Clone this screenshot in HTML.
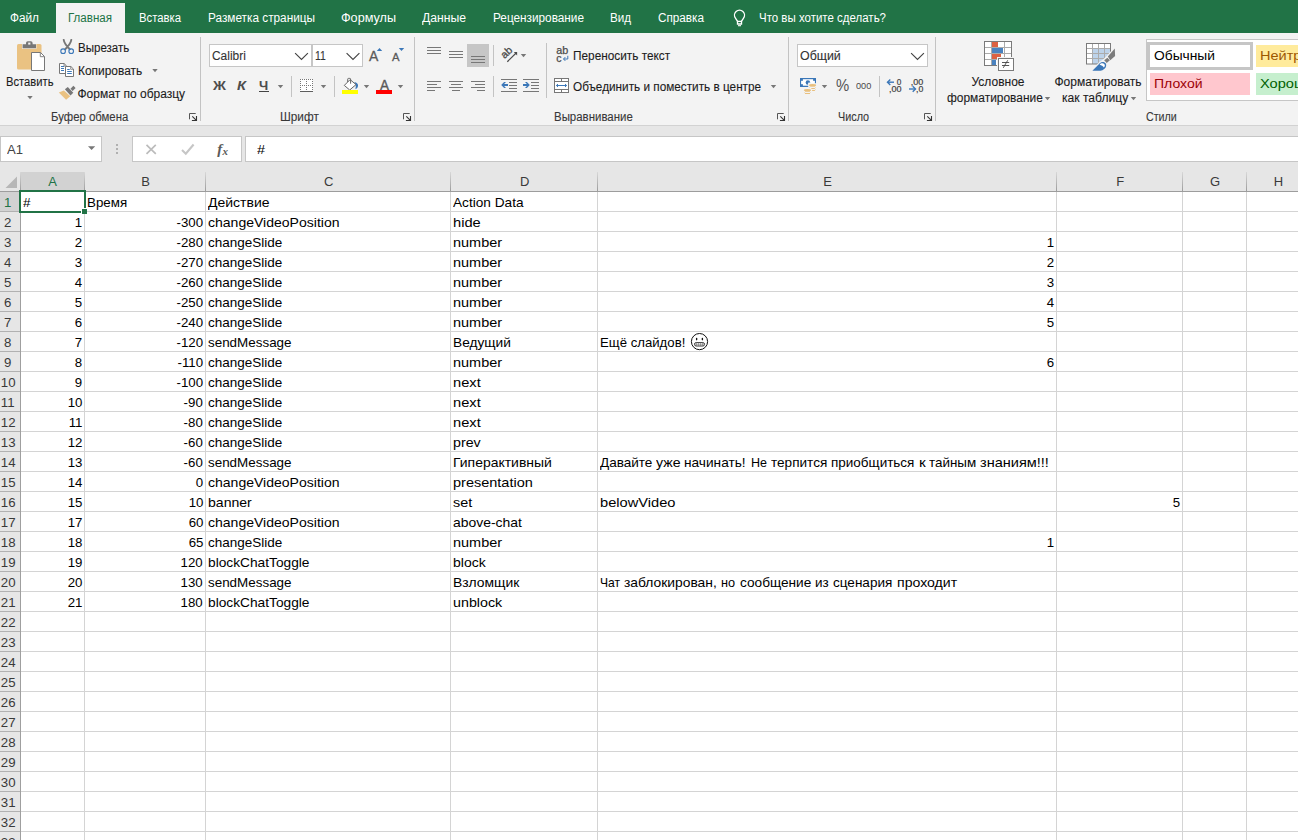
<!DOCTYPE html><html><head><meta charset="utf-8"><title>Excel</title><style>html,body{margin:0;padding:0;overflow:hidden}body{width:1298px;height:840px;overflow:hidden;position:relative;background:#e6e6e6;font-family:"Liberation Sans",sans-serif;}div,svg{box-sizing:border-box}</style></head><body><div style="position:absolute;left:0;top:0;width:1298px;height:840px;overflow:hidden">
<div style="position:absolute;left:0px;top:0px;width:1298px;height:33px;background:#217346;"></div>
<div style="position:absolute;left:56px;top:3px;width:69px;height:30px;background:#f3f3f3;"></div>
<div style="position:absolute;top:9.00px;height:18px;line-height:18px;font-size:12px;color:#ffffff;white-space:pre;left:10.00px;transform-origin:0 50%;transform:scaleX(0.9830);">Файл</div>
<div style="position:absolute;top:9.00px;height:18px;line-height:18px;font-size:12px;color:#217346;white-space:pre;left:68.00px;transform-origin:0 50%;transform:scaleX(0.9634);">Главная</div>
<div style="position:absolute;top:9.00px;height:18px;line-height:18px;font-size:12px;color:#ffffff;white-space:pre;left:139.00px;transform-origin:0 50%;transform:scaleX(0.9417);">Вставка</div>
<div style="position:absolute;top:9.00px;height:18px;line-height:18px;font-size:12px;color:#ffffff;white-space:pre;left:208.00px;transform-origin:0 50%;transform:scaleX(0.9829);">Разметка страницы</div>
<div style="position:absolute;top:9.00px;height:18px;line-height:18px;font-size:12px;color:#ffffff;white-space:pre;left:341.00px;transform-origin:0 50%;transform:scaleX(1.0533);">Формулы</div>
<div style="position:absolute;top:9.00px;height:18px;line-height:18px;font-size:12px;color:#ffffff;white-space:pre;left:422.00px;transform-origin:0 50%;transform:scaleX(1.0150);">Данные</div>
<div style="position:absolute;top:9.00px;height:18px;line-height:18px;font-size:12px;color:#ffffff;white-space:pre;left:493.00px;transform-origin:0 50%;transform:scaleX(0.9821);">Рецензирование</div>
<div style="position:absolute;top:9.00px;height:18px;line-height:18px;font-size:12px;color:#ffffff;white-space:pre;left:610.00px;transform-origin:0 50%;transform:scaleX(0.9674);">Вид</div>
<div style="position:absolute;top:9.00px;height:18px;line-height:18px;font-size:12px;color:#ffffff;white-space:pre;left:658.00px;transform-origin:0 50%;transform:scaleX(0.9772);">Справка</div>
<div style="position:absolute;top:9.00px;height:18px;line-height:18px;font-size:12px;color:#ffffff;white-space:pre;left:759.00px;transform-origin:0 50%;transform:scaleX(0.9574);">Что вы хотите сделать?</div>
<svg style="position:absolute;left:733px;top:9px;" width="14" height="18" viewBox="0 0 14 18"><path d="M4.6 12.3L2.6 9.3A5 5 0 1 1 10.4 9.3L8.4 12.3" fill="none" stroke="#fff" stroke-width="1.35"/><path d="M4.5 12.4h4v2.6h-4z" fill="none" stroke="#fff" stroke-width="1.35"/><path d="M5 16.7h3" stroke="#fff" stroke-width="1.1"/></svg>
<div style="position:absolute;left:0px;top:33px;width:1298px;height:92px;background:#f3f3f3;"></div>
<div style="position:absolute;left:0px;top:125px;width:1298px;height:1px;background:#d2d2d2;"></div>
<svg style="position:absolute;left:17px;top:41px;" width="29" height="31" viewBox="0 0 29 31">
<rect x="0" y="3" width="24.5" height="25.5" rx="1.5" fill="#eac282"/>
<rect x="5" y="2.6" width="14.4" height="5.2" fill="#f3f3f3"/>
<path d="M5.6 3.2h3.4v-1.2a1.8 1.8 0 0 1 1.8-1.8h3a1.8 1.8 0 0 1 1.8 1.8v1.2h3.4v4h-13.4z" fill="#777"/>
<rect x="11.2" y="1.6" width="2.2" height="2" fill="#f3f3f3"/>
<path d="M14.5 11.5h9l4 4v14h-13z" fill="#fff" stroke="#777" stroke-width="1"/>
<path d="M23.3 11.7v4h4" fill="none" stroke="#777" stroke-width="0.9"/>
</svg>
<div style="position:absolute;top:72.80px;height:18px;line-height:18px;font-size:12px;color:#1c1c1c;white-space:pre;left:5.60px;transform-origin:0 50%;transform:scaleX(0.9339);-webkit-text-stroke:0.1px #1c1c1c;">Вставить</div>
<svg style="position:absolute;left:27px;top:96px;" width="7" height="5" viewBox="0 0 7 5"><g transform="translate(0.3,0)"><path d="M0 0h5.4L2.7 3.3z" fill="#777"/></g></svg>
<svg style="position:absolute;left:60px;top:39px;" width="16" height="16" viewBox="0 0 16 16"><g transform="translate(0,0.5)">
<path d="M3.700 0.400C4.200 3.500 6.500 6.500 9.800 9.700M11.300 0.400C10.800 3.500 8.500 6.500 5.200 9.700" stroke="#777" stroke-width="1.900" fill="none" stroke-linecap="round"/>
<circle cx="3.100" cy="11.700" r="2.300" fill="none" stroke="#3b77b8" stroke-width="1.100"/>
<circle cx="11.200" cy="11.700" r="2.300" fill="none" stroke="#3b77b8" stroke-width="1.100"/>
</g></svg>
<div style="position:absolute;top:38.80px;height:18px;line-height:18px;font-size:12px;color:#1c1c1c;white-space:pre;left:77.50px;transform-origin:0 50%;transform:scaleX(0.9612);-webkit-text-stroke:0.1px #1c1c1c;">Вырезать</div>
<svg style="position:absolute;left:59px;top:63px;" width="16" height="15" viewBox="0 0 16 15">
<path d="M0.5 0.5h4.6l2.4 2.4v7.600h-7z" fill="#fff" stroke="#777"/>
<path d="M5 0.7v2.4h2.4" fill="none" stroke="#777" stroke-width="0.8"/>
<path d="M2 3.5h3M2 5.500h3M2 7.500h3" stroke="#3b77b8" stroke-width="1"/>
<path d="M6.5 3.5h5.400l2.600 2.600v7.400h-8z" fill="#fff" stroke="#777"/>
<path d="M11.7 3.7v2.600h2.600" fill="none" stroke="#777" stroke-width="0.8"/>
<path d="M8.200 6.500h2.500M8.200 8.500h4.600M8.200 10.500h4.600" stroke="#3b77b8" stroke-width="1"/>
</svg>
<div style="position:absolute;top:61.80px;height:18px;line-height:18px;font-size:12px;color:#1c1c1c;white-space:pre;left:77.50px;transform-origin:0 50%;transform:scaleX(0.9937);-webkit-text-stroke:0.1px #1c1c1c;">Копировать</div>
<svg style="position:absolute;left:152px;top:69px;" width="7" height="5" viewBox="0 0 7 5"><g transform="translate(0.3,0)"><path d="M0 0h5.4L2.7 3.3z" fill="#777"/></g></svg>
<svg style="position:absolute;left:58px;top:85px;" width="19" height="16" viewBox="0 0 19 16">
<path d="M0.800 7.400L5.900 5.500L12.300 11.300L8.100 14.800z" fill="#eac282"/>
<path d="M6.900 4.300L9.800 2.100L15.300 7.800L12.500 10.400z" fill="#777"/>
<path d="M12.500 3.700L15.400 0.800L17.600 2.900L14.600 5.900z" fill="#777"/>
</svg>
<div style="position:absolute;top:84.80px;height:18px;line-height:18px;font-size:12px;color:#1c1c1c;white-space:pre;left:77.50px;transform-origin:0 50%;-webkit-text-stroke:0.1px #1c1c1c;">Формат по образцу</div>
<div style="position:absolute;top:107.60px;height:18px;line-height:18px;font-size:12px;color:#383838;white-space:pre;left:50.50px;transform-origin:0 50%;transform:scaleX(0.9481);-webkit-text-stroke:0.1px #383838;">Буфер обмена</div>
<svg style="position:absolute;left:188px;top:112px;" width="11" height="11" viewBox="0 0 11 11"><g transform="translate(0.5,0.5)"><path d="M1 6.800V1H7.200" fill="none" stroke="#555" stroke-width="1"/><path d="M3.800 3.800L7.600 7.600" stroke="#333" stroke-width="1.1"/><path d="M8 3.400V8H3.400" fill="none" stroke="#333" stroke-width="1.1"/></g></svg>
<div style="position:absolute;left:200px;top:37px;width:1px;height:84px;background:#c3c3c3;"></div>
<div style="position:absolute;left:209px;top:44px;width:103px;height:23px;background:#fff;border:1px solid #c6c6c6;"></div>
<div style="position:absolute;left:312px;top:44px;width:51px;height:23px;background:#fff;border:1px solid #c6c6c6;"></div>
<div style="position:absolute;top:46.80px;height:18px;line-height:18px;font-size:12px;color:#333;white-space:pre;left:212.00px;transform-origin:0 50%;transform:scaleX(0.9939);-webkit-text-stroke:0.1px #333;">Calibri</div>
<svg style="position:absolute;left:294px;top:52px;" width="16" height="9" viewBox="0 0 16 9"><g transform="translate(0,0.5)"><path d="M1.100 0.700L7.500 7L13.900 0.700" fill="none" stroke="#444" stroke-width="1.150"/></g></svg>
<div style="position:absolute;top:46.80px;height:18px;line-height:18px;font-size:12px;color:#333;white-space:pre;left:315.00px;transform-origin:0 50%;transform:scaleX(0.8671);-webkit-text-stroke:0.1px #333;">11</div>
<svg style="position:absolute;left:345px;top:52px;" width="16" height="9" viewBox="0 0 16 9"><g transform="translate(0.5,0.5)"><path d="M1.100 0.700L7.500 7L13.900 0.700" fill="none" stroke="#444" stroke-width="1.150"/></g></svg>
<div style="position:absolute;top:46.40px;height:20px;line-height:20px;font-size:14px;color:#595959;white-space:pre;left:369.20px;transform-origin:0 50%;transform:scaleX(0.9959);-webkit-text-stroke:0.3px #595959;">A</div>
<svg style="position:absolute;left:376px;top:47px;" width="7" height="5" viewBox="0 0 7 5"><g transform="translate(0.8,0.6)"><path d="M0 3.400h5.400L2.700 0.300z" fill="#3b77b8"/></g></svg>
<div style="position:absolute;top:49.10px;height:17px;line-height:17px;font-size:11px;color:#595959;white-space:pre;left:392.20px;transform-origin:0 50%;transform:scaleX(1.0222);-webkit-text-stroke:0.3px #595959;">A</div>
<svg style="position:absolute;left:398px;top:47px;" width="7" height="5" viewBox="0 0 7 5"><g transform="translate(0.8,0.8)"><path d="M0 0.100h5.400L2.700 3.300z" fill="#3b77b8"/></g></svg>
<div style="position:absolute;top:76.85px;height:18.5px;line-height:18.5px;font-size:12.5px;color:#4d4d4d;white-space:pre;font-weight:bold;left:213.30px;transform-origin:0 50%;transform:scaleX(1.1419);">Ж</div>
<div style="position:absolute;top:76.85px;height:18.5px;line-height:18.5px;font-size:12.5px;color:#4d4d4d;white-space:pre;font-weight:bold;font-style:italic;left:237.20px;transform-origin:0 50%;transform:scaleX(1.1713);">К</div>
<div style="position:absolute;top:76.85px;height:18.5px;line-height:18.5px;font-size:12.5px;color:#4d4d4d;white-space:pre;font-weight:bold;left:259.10px;transform-origin:0 50%;transform:scaleX(1.0475);">Ч</div>
<div style="position:absolute;left:259px;top:91px;width:10px;height:1px;background:#444;"></div>
<svg style="position:absolute;left:277px;top:85px;" width="7" height="5" viewBox="0 0 7 5"><g transform="translate(0.8,0)"><path d="M0 0h5.4L2.7 3.3z" fill="#777"/></g></svg>
<div style="position:absolute;left:291px;top:76px;width:1px;height:21px;background:#c3c3c3;"></div>
<svg style="position:absolute;left:300px;top:79px;" width="14" height="14" viewBox="0 0 14 14"><rect x="0" y="0" width="13" height="12.500" fill="#fff"/><rect x="0" y="0.0" width="1" height="1" fill="#777"/><rect x="2" y="0.0" width="1" height="1" fill="#777"/><rect x="4" y="0.0" width="1" height="1" fill="#777"/><rect x="6" y="0.0" width="1" height="1" fill="#777"/><rect x="8" y="0.0" width="1" height="1" fill="#777"/><rect x="10" y="0.0" width="1" height="1" fill="#777"/><rect x="12" y="0.0" width="1" height="1" fill="#777"/><rect x="0" y="6.0" width="1" height="1" fill="#777"/><rect x="2" y="6.0" width="1" height="1" fill="#777"/><rect x="4" y="6.0" width="1" height="1" fill="#777"/><rect x="6" y="6.0" width="1" height="1" fill="#777"/><rect x="8" y="6.0" width="1" height="1" fill="#777"/><rect x="10" y="6.0" width="1" height="1" fill="#777"/><rect x="12" y="6.0" width="1" height="1" fill="#777"/><rect x="0" y="0" width="1" height="1" fill="#777"/><rect x="0" y="2" width="1" height="1" fill="#777"/><rect x="0" y="4" width="1" height="1" fill="#777"/><rect x="0" y="6" width="1" height="1" fill="#777"/><rect x="0" y="8" width="1" height="1" fill="#777"/><rect x="0" y="10" width="1" height="1" fill="#777"/><rect x="6" y="0" width="1" height="1" fill="#777"/><rect x="6" y="2" width="1" height="1" fill="#777"/><rect x="6" y="4" width="1" height="1" fill="#777"/><rect x="6" y="6" width="1" height="1" fill="#777"/><rect x="6" y="8" width="1" height="1" fill="#777"/><rect x="6" y="10" width="1" height="1" fill="#777"/><rect x="12" y="0" width="1" height="1" fill="#777"/><rect x="12" y="2" width="1" height="1" fill="#777"/><rect x="12" y="4" width="1" height="1" fill="#777"/><rect x="12" y="6" width="1" height="1" fill="#777"/><rect x="12" y="8" width="1" height="1" fill="#777"/><rect x="12" y="10" width="1" height="1" fill="#777"/><rect x="0" y="12" width="13" height="1" fill="#5e5e5e"/></svg>
<svg style="position:absolute;left:320px;top:85px;" width="7" height="5" viewBox="0 0 7 5"><g transform="translate(0.8,0)"><path d="M0 0h5.4L2.7 3.3z" fill="#777"/></g></svg>
<div style="position:absolute;left:334px;top:76px;width:1px;height:21px;background:#c3c3c3;"></div>
<svg style="position:absolute;left:338px;top:74px;" width="24" height="18" viewBox="0 0 24 18">
<path d="M16.300 8.200C18.600 8.300 20.600 9.800 19.900 12.400C19.500 13.800 18.600 14.600 17.400 15.300C17.700 13.600 18 12 17.600 10.600z" fill="#3b77b8"/>
<path d="M12.100 5.600L18 10.600L11.700 16L6.300 11.400z" fill="#fff" stroke="#666" stroke-width="1"/>
<path d="M9.700 8V5.200a0.800 0.800 0 0 1 0.800-0.800h1.300a0.800 0.800 0 0 1 0.800 0.800V9.700" fill="none" stroke="#666" stroke-width="1"/>
</svg>
<div style="position:absolute;left:342px;top:90px;width:16.3px;height:4px;background:#ffff00;"></div>
<svg style="position:absolute;left:363px;top:85px;" width="7" height="5" viewBox="0 0 7 5"><g transform="translate(0.8,0)"><path d="M0 0h5.4L2.7 3.3z" fill="#777"/></g></svg>
<div style="position:absolute;top:75.00px;height:20px;line-height:20px;font-size:14px;color:#595959;white-space:pre;left:379.70px;transform-origin:0 50%;transform:scaleX(0.9638);-webkit-text-stroke:0.35px #595959;">A</div>
<div style="position:absolute;left:376px;top:90px;width:16px;height:4px;background:#ff0000;"></div>
<svg style="position:absolute;left:397px;top:85px;" width="7" height="5" viewBox="0 0 7 5"><g transform="translate(0.8,0)"><path d="M0 0h5.4L2.7 3.3z" fill="#777"/></g></svg>
<div style="position:absolute;top:107.60px;height:18px;line-height:18px;font-size:12px;color:#383838;white-space:pre;left:280.00px;transform-origin:0 50%;transform:scaleX(0.9828);-webkit-text-stroke:0.1px #383838;">Шрифт</div>
<svg style="position:absolute;left:402px;top:112px;" width="11" height="11" viewBox="0 0 11 11"><g transform="translate(0.5,0.5)"><path d="M1 6.800V1H7.200" fill="none" stroke="#555" stroke-width="1"/><path d="M3.800 3.800L7.600 7.600" stroke="#333" stroke-width="1.1"/><path d="M8 3.400V8H3.400" fill="none" stroke="#333" stroke-width="1.1"/></g></svg>
<div style="position:absolute;left:414px;top:37px;width:1px;height:84px;background:#c3c3c3;"></div>
<div style="position:absolute;left:427px;top:47px;width:14px;height:1px;background:#777;"></div><div style="position:absolute;left:427px;top:50px;width:14px;height:1px;background:#777;"></div><div style="position:absolute;left:427px;top:53px;width:14px;height:1px;background:#777;"></div>
<div style="position:absolute;left:449px;top:51px;width:14px;height:1px;background:#777;"></div><div style="position:absolute;left:449px;top:54px;width:14px;height:1px;background:#777;"></div><div style="position:absolute;left:449px;top:57px;width:14px;height:1px;background:#777;"></div>
<div style="position:absolute;left:467px;top:44px;width:22px;height:23px;background:#c6c6c6;"></div>
<div style="position:absolute;left:471px;top:56px;width:14px;height:1px;background:#777;"></div><div style="position:absolute;left:471px;top:59px;width:14px;height:1px;background:#777;"></div><div style="position:absolute;left:471px;top:62px;width:14px;height:1px;background:#777;"></div>
<div style="position:absolute;left:493px;top:45px;width:1px;height:21px;background:#c3c3c3;"></div>
<svg style="position:absolute;left:496px;top:42px;overflow:visible;" width="36" height="26" viewBox="0 0 36 26">
<g transform="translate(8.4,16.9) rotate(-42)"><text x="0" y="0" font-size="10.5" font-family="Liberation Sans" fill="#4a4a4a" stroke="#4a4a4a" stroke-width="0.3">ab</text></g>
<path d="M11.3 19.7L20.4 10.800" stroke="#4a4a4a" stroke-width="1.2" fill="none"/>
<path d="M17.800 10.100h3.300v3.300z" fill="#4a4a4a"/>
</svg>
<svg style="position:absolute;left:520px;top:54px;" width="7" height="5" viewBox="0 0 7 5"><g transform="translate(0.8,0)"><path d="M0 0h5.4L2.7 3.3z" fill="#777"/></g></svg>
<div style="position:absolute;left:546px;top:43px;width:1px;height:55px;background:#c3c3c3;"></div>
<svg style="position:absolute;left:555px;top:46px;" width="15" height="18" viewBox="0 0 15 18"><g transform="translate(0.3,0.8)">
<text x="0.9" y="7.6" font-size="10.5" font-family="Liberation Sans" fill="#4a4a4a" stroke="#4a4a4a" stroke-width="0.25" textLength="12" lengthAdjust="spacingAndGlyphs">ab</text>
<text x="0.9" y="14.8" font-size="10.5" font-family="Liberation Sans" fill="#4a4a4a" stroke="#4a4a4a" stroke-width="0.25">c</text>
<path d="M12.500 9v3.2H8.400" stroke="#3b77b8" stroke-width="1" fill="none"/>
<path d="M10 10.300L8.200 12.200L10 14.100" stroke="#3b77b8" stroke-width="1" fill="none"/>
</g></svg>
<div style="position:absolute;top:46.80px;height:18px;line-height:18px;font-size:12px;color:#1c1c1c;white-space:pre;left:573.30px;transform-origin:0 50%;transform:scaleX(0.9844);-webkit-text-stroke:0.1px #1c1c1c;">Переносить текст</div>
<div style="position:absolute;left:427px;top:81px;width:14px;height:1px;background:#777;"></div><div style="position:absolute;left:427px;top:84px;width:10px;height:1px;background:#777;"></div><div style="position:absolute;left:427px;top:87px;width:14px;height:1px;background:#777;"></div><div style="position:absolute;left:427px;top:90px;width:8px;height:1px;background:#777;"></div>
<div style="position:absolute;left:449px;top:81px;width:14px;height:1px;background:#777;"></div><div style="position:absolute;left:451px;top:84px;width:10px;height:1px;background:#777;"></div><div style="position:absolute;left:449px;top:87px;width:14px;height:1px;background:#777;"></div><div style="position:absolute;left:452px;top:90px;width:8px;height:1px;background:#777;"></div>
<div style="position:absolute;left:471px;top:81px;width:14px;height:1px;background:#777;"></div><div style="position:absolute;left:475px;top:84px;width:10px;height:1px;background:#777;"></div><div style="position:absolute;left:471px;top:87px;width:14px;height:1px;background:#777;"></div><div style="position:absolute;left:477px;top:90px;width:8px;height:1px;background:#777;"></div>
<div style="position:absolute;left:493px;top:76px;width:1px;height:21px;background:#c3c3c3;"></div>
<svg style="position:absolute;left:501px;top:79px;" width="16" height="13" viewBox="0 0 16 13">
<path d="M0 0.5h16M0 12.5h16M8 3.5h8M8 6.5h8M8 9.5h8" stroke="#777" stroke-width="1"/>
<path d="M0.200 6L3.100 3H5L3.100 5H7V7H3.100L5 9H3.100z" fill="#3b77b8"/>
</svg>
<svg style="position:absolute;left:523px;top:79px;" width="16" height="13" viewBox="0 0 16 13">
<path d="M0 0.5h16M0 12.5h16M8 3.5h8M8 6.5h8M8 9.5h8" stroke="#777" stroke-width="1"/>
<path d="M6.800 6L3.900 3H2L3.900 5H0V7H3.900L2 9H3.900z" fill="#3b77b8"/>
</svg>
<svg style="position:absolute;left:554px;top:78px;" width="15" height="15" viewBox="0 0 15 15">
<rect x="0.5" y="0.5" width="14" height="14" fill="#fff" stroke="#777"/>
<path d="M0.5 3.5h14M0.5 11.5h14M7.5 0.5v3M7.5 11.5v3" stroke="#777" stroke-width="1"/>
<path d="M2.5 7.5h10" stroke="#3b77b8" stroke-width="1"/>
<path d="M4 6L2.4 7.5L4 9M11 6L12.6 7.5L11 9" stroke="#3b77b8" stroke-width="1" fill="none"/>
</svg>
<div style="position:absolute;top:77.50px;height:18px;line-height:18px;font-size:12px;color:#1c1c1c;white-space:pre;left:573.30px;transform-origin:0 50%;transform:scaleX(0.9805);-webkit-text-stroke:0.1px #1c1c1c;">Объединить и поместить в центре</div>
<svg style="position:absolute;left:770px;top:85px;" width="7" height="5" viewBox="0 0 7 5"><g transform="translate(0.8,0)"><path d="M0 0h5.4L2.7 3.3z" fill="#777"/></g></svg>
<div style="position:absolute;top:107.60px;height:18px;line-height:18px;font-size:12px;color:#383838;white-space:pre;left:553.50px;transform-origin:0 50%;transform:scaleX(0.9540);-webkit-text-stroke:0.1px #383838;">Выравнивание</div>
<svg style="position:absolute;left:776px;top:112px;" width="11" height="11" viewBox="0 0 11 11"><g transform="translate(0.5,0.5)"><path d="M1 6.800V1H7.200" fill="none" stroke="#555" stroke-width="1"/><path d="M3.800 3.800L7.600 7.600" stroke="#333" stroke-width="1.1"/><path d="M8 3.400V8H3.400" fill="none" stroke="#333" stroke-width="1.1"/></g></svg>
<div style="position:absolute;left:788px;top:37px;width:1px;height:84px;background:#c3c3c3;"></div>
<div style="position:absolute;left:797px;top:44px;width:131px;height:23px;background:#fff;border:1px solid #c6c6c6;"></div>
<div style="position:absolute;top:46.80px;height:18px;line-height:18px;font-size:12px;color:#333;white-space:pre;left:799.50px;transform-origin:0 50%;transform:scaleX(1.0332);-webkit-text-stroke:0.1px #333;">Общий</div>
<svg style="position:absolute;left:910px;top:52px;" width="16" height="9" viewBox="0 0 16 9"><g transform="translate(0,0.5)"><path d="M1.100 0.700L7.500 7L13.900 0.700" fill="none" stroke="#444" stroke-width="1.150"/></g></svg>
<svg style="position:absolute;left:796px;top:72px;" width="36" height="26" viewBox="0 0 36 26">
<rect x="4" y="6" width="16" height="9" fill="#3b77b8"/>
<rect x="5.100" y="7.200" width="13.800" height="6.500" fill="#fff"/>
<rect x="4" y="6" width="2.900" height="2.800" fill="#3b77b8"/><rect x="17.100" y="6" width="2.900" height="2.800" fill="#3b77b8"/>
<rect x="4" y="12.200" width="2.900" height="2.800" fill="#3b77b8"/>
<circle cx="11.900" cy="10.400" r="2.250" fill="#3b77b8"/>
<path d="M12.300 10.600L14.300 10.600L14.300 12.800L12.300 12.800z" fill="#fff"/>
<rect x="12.200" y="11.200" width="9" height="9" fill="#f3f3f3"/>
<rect x="7.300" y="16.300" width="8.500" height="7" fill="#f3f3f3"/>
<g fill="#e9c07f">
<ellipse cx="16.550" cy="13.200" rx="3.600" ry="1.150"/><rect x="14.100" y="13.400" width="5" height="1.200"/>
<rect x="15.300" y="16" width="3.600" height="1"/><rect x="16.100" y="18" width="2.800" height="1"/>
<ellipse cx="11.450" cy="18.200" rx="3.600" ry="1.150"/><rect x="9" y="18.400" width="5" height="1.300"/>
<rect x="9" y="21" width="5" height="1"/>
</g>
<g fill="none" stroke="#e9c07f" stroke-width="0.500">
<path d="M13.200 15.300c0.300 0.300 0.600 0.400 0.900 0.500M19.900 15.300c-0.300 0.300-0.600 0.400-0.900 0.500M19.900 17.300c-0.300 0.300-0.600 0.400-0.900 0.500M8.100 20.300c0.300 0.300 0.600 0.400 0.900 0.500M14.800 20.300c-0.300 0.300-0.600 0.400-0.900 0.500"/>
</g>
</svg>
<svg style="position:absolute;left:821px;top:85px;" width="7" height="5" viewBox="0 0 7 5"><g transform="translate(0.8,0)"><path d="M0 0h5.4L2.7 3.3z" fill="#777"/></g></svg>
<div style="position:absolute;top:75.40px;height:22px;line-height:22px;font-size:16px;color:#555;white-space:pre;left:835.90px;transform-origin:0 50%;transform:scaleX(0.9278);">%</div>
<div style="position:absolute;top:77.70px;height:15.8px;line-height:15.8px;font-size:9.8px;color:#4a4a4a;white-space:pre;left:856.20px;transform-origin:0 50%;transform:scaleX(0.9358);">000</div>
<div style="position:absolute;left:879px;top:76px;width:1px;height:21px;background:#c3c3c3;"></div>
<svg style="position:absolute;left:886px;top:78px;overflow:visible;" width="18" height="17" viewBox="0 0 18 17"><g transform="translate(0.5,0)">
<path d="M7.5 4.2H1.2" stroke="#3b77b8" stroke-width="1.4"/><path d="M3.800 1.500L1 4.200L3.800 6.900" stroke="#3b77b8" stroke-width="1.400" fill="none"/>
<text x="10.300" y="6.800" font-size="8.200" font-family="Liberation Sans" fill="#444" stroke="#444" stroke-width="0.2">0</text>
<text x="2.500" y="14.200" font-size="8.200" font-family="Liberation Sans" fill="#444" stroke="#444" stroke-width="0.2" textLength="12.500" lengthAdjust="spacingAndGlyphs">,00</text>
</g></svg>
<svg style="position:absolute;left:908px;top:78px;overflow:visible;" width="18" height="17" viewBox="0 0 18 17"><g transform="translate(0.5,0)">
<text x="2.300" y="6.800" font-size="8.200" font-family="Liberation Sans" fill="#444" stroke="#444" stroke-width="0.2" textLength="12.500" lengthAdjust="spacingAndGlyphs">,00</text>
<path d="M0.500 11H6.800" stroke="#3b77b8" stroke-width="1.400"/><path d="M4.200 8.300L7 11L4.200 13.700" stroke="#3b77b8" stroke-width="1.400" fill="none"/>
<text x="7.500" y="14.200" font-size="8.200" font-family="Liberation Sans" fill="#444" stroke="#444" stroke-width="0.2" textLength="7.300" lengthAdjust="spacingAndGlyphs">,0</text>
</g></svg>
<div style="position:absolute;top:107.60px;height:18px;line-height:18px;font-size:12px;color:#383838;white-space:pre;left:838.30px;transform-origin:0 50%;transform:scaleX(0.9012);-webkit-text-stroke:0.1px #383838;">Число</div>
<svg style="position:absolute;left:923px;top:112px;" width="11" height="11" viewBox="0 0 11 11"><g transform="translate(0.5,0.5)"><path d="M1 6.800V1H7.200" fill="none" stroke="#555" stroke-width="1"/><path d="M3.800 3.800L7.600 7.600" stroke="#333" stroke-width="1.1"/><path d="M8 3.400V8H3.400" fill="none" stroke="#333" stroke-width="1.1"/></g></svg>
<div style="position:absolute;left:935px;top:37px;width:1px;height:84px;background:#c3c3c3;"></div>
<svg style="position:absolute;left:978px;top:36px;" width="44" height="38" viewBox="0 0 44 38">
<rect x="6.500" y="5.500" width="27" height="24" fill="#fff"/>
<path d="M6.500 11.500h27M6.500 17.500h27M6.500 23.500h27M13.500 5.500v24M26.500 5.500v24" stroke="#ababab" stroke-width="1"/>
<rect x="14" y="6" width="6" height="5" fill="#dc6141"/>
<rect x="14" y="12" width="11" height="5" fill="#4a82bf"/>
<rect x="14" y="18" width="9" height="5" fill="#dc6141"/>
<rect x="14" y="24" width="4" height="5" fill="#4a82bf"/>
<rect x="6.500" y="5.500" width="27" height="24" fill="none" stroke="#7a7a7a" stroke-width="1"/>
<rect x="19" y="21" width="18" height="15" fill="#f3f3f3"/>
<rect x="20.500" y="22.500" width="15" height="12" fill="#fff" stroke="#7a7a7a" stroke-width="1"/>
<path d="M24 26.500h7.200M24 29.500h7.200" stroke="#444" stroke-width="0.900"/><path d="M29.700 24.300L25.300 31.800" stroke="#444" stroke-width="0.900"/>
</svg>
<div style="position:absolute;top:72.80px;height:18px;line-height:18px;font-size:12px;color:#1c1c1c;white-space:pre;left:971.50px;transform-origin:0 50%;-webkit-text-stroke:0.1px #1c1c1c;">Условное</div>
<div style="position:absolute;top:88.80px;height:18px;line-height:18px;font-size:12px;color:#1c1c1c;white-space:pre;left:946.50px;transform-origin:0 50%;transform:scaleX(0.9944);-webkit-text-stroke:0.1px #1c1c1c;">форматирование</div>
<svg style="position:absolute;left:1044px;top:97px;" width="7" height="5" viewBox="0 0 7 5"><g transform="translate(0.8,0)"><path d="M0 0h5.4L2.7 3.3z" fill="#777"/></g></svg>
<svg style="position:absolute;left:1080px;top:38px;" width="44" height="38" viewBox="0 0 44 38">
<rect x="6.500" y="5.500" width="24" height="20.500" fill="#fff"/>
<rect x="12.500" y="10.500" width="18" height="15.500" fill="#bdd3ea"/>
<path d="M6.500 10.500h24M6.500 15.500h24M6.500 20.500h24M12.500 5.500v20.500M18.500 5.500v20.500M24.500 5.500v20.500" stroke="#ababab" stroke-width="1"/>
<rect x="6.500" y="5.500" width="24" height="20.500" fill="none" stroke="#7a7a7a" stroke-width="1"/>
<path d="M34.300 9.300L26.900 17.800L23.300 21.200L19 24.300L10.800 33.500H37V9.300z" fill="#f3f3f3"/>
<path d="M27.800 18.600L34.800 10.500L35.100 18.100L30.300 22.200z" fill="#7c7c7c"/>
<path d="M24.200 22.200L27.400 19.700L29.900 22.200L26.700 24.900z" fill="#7c7c7c"/>
<path d="M12.400 32.800L19.800 25.200C21.500 23.600 24.200 23.700 25.500 25.300C26.800 27 26.200 29.300 24.500 30.800C23 32.100 21.800 32.800 20.500 32.800z" fill="#3b77b8"/>
<path d="M19.600 26.600C20.800 25 23.300 24.900 24.400 26.200C25.200 27.300 24.900 28.600 23.800 29.600C23.200 28.300 22.500 27.600 21.500 27.400C20.800 27.200 20.100 27.100 19.600 26.600z" fill="#fff"/>
</svg>
<div style="position:absolute;top:72.80px;height:18px;line-height:18px;font-size:12px;color:#1c1c1c;white-space:pre;left:1054.50px;transform-origin:0 50%;-webkit-text-stroke:0.1px #1c1c1c;">Форматировать</div>
<div style="position:absolute;top:88.80px;height:18px;line-height:18px;font-size:12px;color:#1c1c1c;white-space:pre;left:1061.50px;transform-origin:0 50%;transform:scaleX(1.0088);-webkit-text-stroke:0.1px #1c1c1c;">как таблицу</div>
<svg style="position:absolute;left:1130px;top:97px;" width="7" height="5" viewBox="0 0 7 5"><g transform="translate(0.8,0)"><path d="M0 0h5.4L2.7 3.3z" fill="#777"/></g></svg>
<div style="position:absolute;left:1146px;top:39px;width:160px;height:62px;background:#fff;border:1px solid #c6c6c6;"></div>
<div style="position:absolute;left:1147px;top:42px;width:106px;height:28px;background:#fff;border:3px solid #c6c6c6;"></div>
<div style="position:absolute;top:46.10px;height:19px;line-height:19px;font-size:13px;color:#000;white-space:pre;left:1153.50px;transform-origin:0 50%;transform:scaleX(1.0616);">Обычный</div>
<div style="position:absolute;left:1150px;top:73px;width:100px;height:22px;background:#ffc7ce;"></div>
<div style="position:absolute;top:74.10px;height:19px;line-height:19px;font-size:13px;color:#9c0006;white-space:pre;left:1153.50px;transform-origin:0 50%;transform:scaleX(1.0777);">Плохой</div>
<div style="position:absolute;left:1256px;top:45px;width:50px;height:22px;background:#ffeb9c;"></div>
<div style="position:absolute;top:46.10px;height:19px;line-height:19px;font-size:13px;color:#9c5700;white-space:pre;left:1259.50px;transform-origin:0 50%;transform:scaleX(1.1161);">Нейтральный</div>
<div style="position:absolute;left:1256px;top:73px;width:50px;height:22px;background:#c6efce;"></div>
<div style="position:absolute;top:74.10px;height:19px;line-height:19px;font-size:13px;color:#006100;white-space:pre;left:1259.50px;transform-origin:0 50%;transform:scaleX(1.1239);">Хороший</div>
<div style="position:absolute;top:107.60px;height:18px;line-height:18px;font-size:12px;color:#383838;white-space:pre;left:1145.50px;transform-origin:0 50%;transform:scaleX(0.8910);-webkit-text-stroke:0.1px #383838;">Стили</div>
<div style="position:absolute;left:0px;top:136px;width:102px;height:26px;background:#ffffff;border:1px solid #c6c6c6;"></div>
<div style="position:absolute;top:140.00px;height:19px;line-height:19px;font-size:13px;color:#444;white-space:pre;left:7.00px;transform-origin:0 50%;transform:scaleX(1.0062);">A1</div>
<svg style="position:absolute;left:87px;top:146px;" width="10" height="6" viewBox="0 0 10 6"><path d="M1 0.300h7.200L4.600 4z" fill="#777"/></svg>
<div style="position:absolute;left:116px;top:144px;width:2px;height:2px;background:#b0b0b0;"></div>
<div style="position:absolute;left:116px;top:148px;width:2px;height:2px;background:#b0b0b0;"></div>
<div style="position:absolute;left:116px;top:152px;width:2px;height:2px;background:#b0b0b0;"></div>
<div style="position:absolute;left:132px;top:136px;width:110px;height:26px;background:#ffffff;border:1px solid #c6c6c6;"></div>
<div style="position:absolute;left:245px;top:136px;width:1060px;height:26px;background:#ffffff;border:1px solid #c6c6c6;"></div>
<div style="position:absolute;top:140.00px;height:19px;line-height:19px;font-size:13px;color:#000;white-space:pre;left:257.00px;transform-origin:0 50%;transform:scaleX(1.1066);">#</div>
<svg style="position:absolute;left:145px;top:144px;" width="13" height="12" viewBox="0 0 13 12"><g transform="translate(0.5,0)"><path d="M1 0.800L10.300 9.800M10.300 0.800L1 9.800" stroke="#bcbcbc" stroke-width="1.700" fill="none"/></g></svg>
<svg style="position:absolute;left:181px;top:143px;" width="15" height="13" viewBox="0 0 15 13"><g transform="translate(0,0.5)"><path d="M1 6.500L4.800 10.200L12.600 1" stroke="#c6c6c6" stroke-width="2.100" fill="none"/></g></svg>
<div style="position:absolute;top:138.70px;height:21px;line-height:21px;font-size:15px;color:#5a5a5a;white-space:pre;font-weight:bold;font-style:italic;left:217.30px;transform-origin:0 50%;font-family:'Liberation Serif',serif;">f</div>
<div style="position:absolute;top:142.80px;height:17px;line-height:17px;font-size:11px;color:#5a5a5a;white-space:pre;font-weight:bold;font-style:italic;left:222.60px;transform-origin:0 50%;font-family:'Liberation Serif',serif;">x</div>
<div style="position:absolute;left:21px;top:192px;width:1277px;height:648px;background:#ffffff;"></div>
<div style="position:absolute;left:21px;top:172px;width:63px;height:19px;background:#d2d2d2;"></div>
<div style="position:absolute;left:0px;top:192px;width:20px;height:20px;background:#d2d2d2;"></div>
<svg style="position:absolute;left:5px;top:176px;" width="13" height="13" viewBox="0 0 13 13"><path d="M12 0.5V12H0.5z" fill="#b7b7b7"/></svg>
<div style="position:absolute;top:172.10px;height:19px;line-height:19px;font-size:13px;color:#217346;white-space:pre;left:48.26px;transform-origin:50% 50%;">A</div>
<div style="position:absolute;left:84px;top:172px;width:1px;height:19px;background:linear-gradient(#d8d8d8,#9c9c9c);"></div>
<div style="position:absolute;top:172.10px;height:19px;line-height:19px;font-size:13px;color:#3a3a3a;white-space:pre;left:141.26px;transform-origin:50% 50%;">B</div>
<div style="position:absolute;left:205px;top:172px;width:1px;height:19px;background:linear-gradient(#d8d8d8,#9c9c9c);"></div>
<div style="position:absolute;top:172.10px;height:19px;line-height:19px;font-size:13px;color:#3a3a3a;white-space:pre;left:323.91px;transform-origin:50% 50%;">C</div>
<div style="position:absolute;left:450px;top:172px;width:1px;height:19px;background:linear-gradient(#d8d8d8,#9c9c9c);"></div>
<div style="position:absolute;top:172.10px;height:19px;line-height:19px;font-size:13px;color:#3a3a3a;white-space:pre;left:519.91px;transform-origin:50% 50%;">D</div>
<div style="position:absolute;left:597px;top:172px;width:1px;height:19px;background:linear-gradient(#d8d8d8,#9c9c9c);"></div>
<div style="position:absolute;top:172.10px;height:19px;line-height:19px;font-size:13px;color:#3a3a3a;white-space:pre;left:823.26px;transform-origin:50% 50%;">E</div>
<div style="position:absolute;left:1056px;top:172px;width:1px;height:19px;background:linear-gradient(#d8d8d8,#9c9c9c);"></div>
<div style="position:absolute;top:172.10px;height:19px;line-height:19px;font-size:13px;color:#3a3a3a;white-space:pre;left:1116.13px;transform-origin:50% 50%;">F</div>
<div style="position:absolute;left:1182px;top:172px;width:1px;height:19px;background:linear-gradient(#d8d8d8,#9c9c9c);"></div>
<div style="position:absolute;top:172.10px;height:19px;line-height:19px;font-size:13px;color:#3a3a3a;white-space:pre;left:1210.04px;transform-origin:50% 50%;">G</div>
<div style="position:absolute;left:1246px;top:172px;width:1px;height:19px;background:linear-gradient(#d8d8d8,#9c9c9c);"></div>
<div style="position:absolute;top:172.10px;height:19px;line-height:19px;font-size:13px;color:#3a3a3a;white-space:pre;left:1273.71px;transform-origin:50% 50%;">H</div>
<div style="position:absolute;left:1399px;top:172px;width:1px;height:19px;background:linear-gradient(#d8d8d8,#9c9c9c);"></div>
<div style="position:absolute;left:20px;top:172px;width:1px;height:19px;background:linear-gradient(#d8d8d8,#9c9c9c);"></div>
<div style="position:absolute;left:0px;top:191px;width:1298px;height:1px;background:#9d9d9d;"></div>
<div style="position:absolute;left:20px;top:192px;width:1px;height:648px;background:#9f9f9f;"></div>
<div style="position:absolute;left:21px;top:211px;width:1277px;height:1px;background:#d4d4d4;"></div>
<div style="position:absolute;left:0px;top:211px;width:20px;height:1px;background:#b1b1b1;"></div>
<div style="position:absolute;left:21px;top:231px;width:1277px;height:1px;background:#d4d4d4;"></div>
<div style="position:absolute;left:0px;top:231px;width:20px;height:1px;background:#b1b1b1;"></div>
<div style="position:absolute;left:21px;top:251px;width:1277px;height:1px;background:#d4d4d4;"></div>
<div style="position:absolute;left:0px;top:251px;width:20px;height:1px;background:#b1b1b1;"></div>
<div style="position:absolute;left:21px;top:271px;width:1277px;height:1px;background:#d4d4d4;"></div>
<div style="position:absolute;left:0px;top:271px;width:20px;height:1px;background:#b1b1b1;"></div>
<div style="position:absolute;left:21px;top:291px;width:1277px;height:1px;background:#d4d4d4;"></div>
<div style="position:absolute;left:0px;top:291px;width:20px;height:1px;background:#b1b1b1;"></div>
<div style="position:absolute;left:21px;top:311px;width:1277px;height:1px;background:#d4d4d4;"></div>
<div style="position:absolute;left:0px;top:311px;width:20px;height:1px;background:#b1b1b1;"></div>
<div style="position:absolute;left:21px;top:331px;width:1277px;height:1px;background:#d4d4d4;"></div>
<div style="position:absolute;left:0px;top:331px;width:20px;height:1px;background:#b1b1b1;"></div>
<div style="position:absolute;left:21px;top:351px;width:1277px;height:1px;background:#d4d4d4;"></div>
<div style="position:absolute;left:0px;top:351px;width:20px;height:1px;background:#b1b1b1;"></div>
<div style="position:absolute;left:21px;top:371px;width:1277px;height:1px;background:#d4d4d4;"></div>
<div style="position:absolute;left:0px;top:371px;width:20px;height:1px;background:#b1b1b1;"></div>
<div style="position:absolute;left:21px;top:391px;width:1277px;height:1px;background:#d4d4d4;"></div>
<div style="position:absolute;left:0px;top:391px;width:20px;height:1px;background:#b1b1b1;"></div>
<div style="position:absolute;left:21px;top:411px;width:1277px;height:1px;background:#d4d4d4;"></div>
<div style="position:absolute;left:0px;top:411px;width:20px;height:1px;background:#b1b1b1;"></div>
<div style="position:absolute;left:21px;top:431px;width:1277px;height:1px;background:#d4d4d4;"></div>
<div style="position:absolute;left:0px;top:431px;width:20px;height:1px;background:#b1b1b1;"></div>
<div style="position:absolute;left:21px;top:451px;width:1277px;height:1px;background:#d4d4d4;"></div>
<div style="position:absolute;left:0px;top:451px;width:20px;height:1px;background:#b1b1b1;"></div>
<div style="position:absolute;left:21px;top:471px;width:1277px;height:1px;background:#d4d4d4;"></div>
<div style="position:absolute;left:0px;top:471px;width:20px;height:1px;background:#b1b1b1;"></div>
<div style="position:absolute;left:21px;top:491px;width:1277px;height:1px;background:#d4d4d4;"></div>
<div style="position:absolute;left:0px;top:491px;width:20px;height:1px;background:#b1b1b1;"></div>
<div style="position:absolute;left:21px;top:511px;width:1277px;height:1px;background:#d4d4d4;"></div>
<div style="position:absolute;left:0px;top:511px;width:20px;height:1px;background:#b1b1b1;"></div>
<div style="position:absolute;left:21px;top:531px;width:1277px;height:1px;background:#d4d4d4;"></div>
<div style="position:absolute;left:0px;top:531px;width:20px;height:1px;background:#b1b1b1;"></div>
<div style="position:absolute;left:21px;top:551px;width:1277px;height:1px;background:#d4d4d4;"></div>
<div style="position:absolute;left:0px;top:551px;width:20px;height:1px;background:#b1b1b1;"></div>
<div style="position:absolute;left:21px;top:571px;width:1277px;height:1px;background:#d4d4d4;"></div>
<div style="position:absolute;left:0px;top:571px;width:20px;height:1px;background:#b1b1b1;"></div>
<div style="position:absolute;left:21px;top:591px;width:1277px;height:1px;background:#d4d4d4;"></div>
<div style="position:absolute;left:0px;top:591px;width:20px;height:1px;background:#b1b1b1;"></div>
<div style="position:absolute;left:21px;top:611px;width:1277px;height:1px;background:#d4d4d4;"></div>
<div style="position:absolute;left:0px;top:611px;width:20px;height:1px;background:#b1b1b1;"></div>
<div style="position:absolute;left:21px;top:631px;width:1277px;height:1px;background:#d4d4d4;"></div>
<div style="position:absolute;left:0px;top:631px;width:20px;height:1px;background:#b1b1b1;"></div>
<div style="position:absolute;left:21px;top:651px;width:1277px;height:1px;background:#d4d4d4;"></div>
<div style="position:absolute;left:0px;top:651px;width:20px;height:1px;background:#b1b1b1;"></div>
<div style="position:absolute;left:21px;top:671px;width:1277px;height:1px;background:#d4d4d4;"></div>
<div style="position:absolute;left:0px;top:671px;width:20px;height:1px;background:#b1b1b1;"></div>
<div style="position:absolute;left:21px;top:691px;width:1277px;height:1px;background:#d4d4d4;"></div>
<div style="position:absolute;left:0px;top:691px;width:20px;height:1px;background:#b1b1b1;"></div>
<div style="position:absolute;left:21px;top:711px;width:1277px;height:1px;background:#d4d4d4;"></div>
<div style="position:absolute;left:0px;top:711px;width:20px;height:1px;background:#b1b1b1;"></div>
<div style="position:absolute;left:21px;top:731px;width:1277px;height:1px;background:#d4d4d4;"></div>
<div style="position:absolute;left:0px;top:731px;width:20px;height:1px;background:#b1b1b1;"></div>
<div style="position:absolute;left:21px;top:751px;width:1277px;height:1px;background:#d4d4d4;"></div>
<div style="position:absolute;left:0px;top:751px;width:20px;height:1px;background:#b1b1b1;"></div>
<div style="position:absolute;left:21px;top:771px;width:1277px;height:1px;background:#d4d4d4;"></div>
<div style="position:absolute;left:0px;top:771px;width:20px;height:1px;background:#b1b1b1;"></div>
<div style="position:absolute;left:21px;top:791px;width:1277px;height:1px;background:#d4d4d4;"></div>
<div style="position:absolute;left:0px;top:791px;width:20px;height:1px;background:#b1b1b1;"></div>
<div style="position:absolute;left:21px;top:811px;width:1277px;height:1px;background:#d4d4d4;"></div>
<div style="position:absolute;left:0px;top:811px;width:20px;height:1px;background:#b1b1b1;"></div>
<div style="position:absolute;left:21px;top:831px;width:1277px;height:1px;background:#d4d4d4;"></div>
<div style="position:absolute;left:0px;top:831px;width:20px;height:1px;background:#b1b1b1;"></div>
<div style="position:absolute;left:21px;top:851px;width:1277px;height:1px;background:#d4d4d4;"></div>
<div style="position:absolute;left:0px;top:851px;width:20px;height:1px;background:#b1b1b1;"></div>
<div style="position:absolute;left:84px;top:192px;width:1px;height:648px;background:#d4d4d4;"></div>
<div style="position:absolute;left:205px;top:192px;width:1px;height:648px;background:#d4d4d4;"></div>
<div style="position:absolute;left:450px;top:192px;width:1px;height:648px;background:#d4d4d4;"></div>
<div style="position:absolute;left:597px;top:192px;width:1px;height:648px;background:#d4d4d4;"></div>
<div style="position:absolute;left:1056px;top:192px;width:1px;height:648px;background:#d4d4d4;"></div>
<div style="position:absolute;left:1182px;top:192px;width:1px;height:648px;background:#d4d4d4;"></div>
<div style="position:absolute;left:1246px;top:192px;width:1px;height:648px;background:#d4d4d4;"></div>
<div style="position:absolute;top:192.50px;height:19px;line-height:19px;font-size:13px;color:#217346;white-space:pre;left:3.99px;transform-origin:50% 50%;transform:scaleX(1.0200);">1</div>
<div style="position:absolute;top:212.50px;height:19px;line-height:19px;font-size:13px;color:#3a3a3a;white-space:pre;left:3.99px;transform-origin:50% 50%;transform:scaleX(1.0200);">2</div>
<div style="position:absolute;top:232.50px;height:19px;line-height:19px;font-size:13px;color:#3a3a3a;white-space:pre;left:3.99px;transform-origin:50% 50%;transform:scaleX(1.0200);">3</div>
<div style="position:absolute;top:252.50px;height:19px;line-height:19px;font-size:13px;color:#3a3a3a;white-space:pre;left:3.99px;transform-origin:50% 50%;transform:scaleX(1.0200);">4</div>
<div style="position:absolute;top:272.50px;height:19px;line-height:19px;font-size:13px;color:#3a3a3a;white-space:pre;left:3.99px;transform-origin:50% 50%;transform:scaleX(1.0200);">5</div>
<div style="position:absolute;top:292.50px;height:19px;line-height:19px;font-size:13px;color:#3a3a3a;white-space:pre;left:3.99px;transform-origin:50% 50%;transform:scaleX(1.0200);">6</div>
<div style="position:absolute;top:312.50px;height:19px;line-height:19px;font-size:13px;color:#3a3a3a;white-space:pre;left:3.99px;transform-origin:50% 50%;transform:scaleX(1.0200);">7</div>
<div style="position:absolute;top:332.50px;height:19px;line-height:19px;font-size:13px;color:#3a3a3a;white-space:pre;left:3.99px;transform-origin:50% 50%;transform:scaleX(1.0200);">8</div>
<div style="position:absolute;top:352.50px;height:19px;line-height:19px;font-size:13px;color:#3a3a3a;white-space:pre;left:3.99px;transform-origin:50% 50%;transform:scaleX(1.0200);">9</div>
<div style="position:absolute;top:372.50px;height:19px;line-height:19px;font-size:13px;color:#3a3a3a;white-space:pre;left:0.97px;transform-origin:50% 50%;transform:scaleX(1.0200);">10</div>
<div style="position:absolute;top:392.50px;height:19px;line-height:19px;font-size:13px;color:#3a3a3a;white-space:pre;left:1.45px;transform-origin:50% 50%;transform:scaleX(1.0200);">11</div>
<div style="position:absolute;top:412.50px;height:19px;line-height:19px;font-size:13px;color:#3a3a3a;white-space:pre;left:0.97px;transform-origin:50% 50%;transform:scaleX(1.0200);">12</div>
<div style="position:absolute;top:432.50px;height:19px;line-height:19px;font-size:13px;color:#3a3a3a;white-space:pre;left:0.97px;transform-origin:50% 50%;transform:scaleX(1.0200);">13</div>
<div style="position:absolute;top:452.50px;height:19px;line-height:19px;font-size:13px;color:#3a3a3a;white-space:pre;left:0.97px;transform-origin:50% 50%;transform:scaleX(1.0200);">14</div>
<div style="position:absolute;top:472.50px;height:19px;line-height:19px;font-size:13px;color:#3a3a3a;white-space:pre;left:0.97px;transform-origin:50% 50%;transform:scaleX(1.0200);">15</div>
<div style="position:absolute;top:492.50px;height:19px;line-height:19px;font-size:13px;color:#3a3a3a;white-space:pre;left:0.97px;transform-origin:50% 50%;transform:scaleX(1.0200);">16</div>
<div style="position:absolute;top:512.50px;height:19px;line-height:19px;font-size:13px;color:#3a3a3a;white-space:pre;left:0.97px;transform-origin:50% 50%;transform:scaleX(1.0200);">17</div>
<div style="position:absolute;top:532.50px;height:19px;line-height:19px;font-size:13px;color:#3a3a3a;white-space:pre;left:0.97px;transform-origin:50% 50%;transform:scaleX(1.0200);">18</div>
<div style="position:absolute;top:552.50px;height:19px;line-height:19px;font-size:13px;color:#3a3a3a;white-space:pre;left:0.97px;transform-origin:50% 50%;transform:scaleX(1.0200);">19</div>
<div style="position:absolute;top:572.50px;height:19px;line-height:19px;font-size:13px;color:#3a3a3a;white-space:pre;left:0.97px;transform-origin:50% 50%;transform:scaleX(1.0200);">20</div>
<div style="position:absolute;top:592.50px;height:19px;line-height:19px;font-size:13px;color:#3a3a3a;white-space:pre;left:0.97px;transform-origin:50% 50%;transform:scaleX(1.0200);">21</div>
<div style="position:absolute;top:612.50px;height:19px;line-height:19px;font-size:13px;color:#3a3a3a;white-space:pre;left:0.97px;transform-origin:50% 50%;transform:scaleX(1.0200);">22</div>
<div style="position:absolute;top:632.50px;height:19px;line-height:19px;font-size:13px;color:#3a3a3a;white-space:pre;left:0.97px;transform-origin:50% 50%;transform:scaleX(1.0200);">23</div>
<div style="position:absolute;top:652.50px;height:19px;line-height:19px;font-size:13px;color:#3a3a3a;white-space:pre;left:0.97px;transform-origin:50% 50%;transform:scaleX(1.0200);">24</div>
<div style="position:absolute;top:672.50px;height:19px;line-height:19px;font-size:13px;color:#3a3a3a;white-space:pre;left:0.97px;transform-origin:50% 50%;transform:scaleX(1.0200);">25</div>
<div style="position:absolute;top:692.50px;height:19px;line-height:19px;font-size:13px;color:#3a3a3a;white-space:pre;left:0.97px;transform-origin:50% 50%;transform:scaleX(1.0200);">26</div>
<div style="position:absolute;top:712.50px;height:19px;line-height:19px;font-size:13px;color:#3a3a3a;white-space:pre;left:0.97px;transform-origin:50% 50%;transform:scaleX(1.0200);">27</div>
<div style="position:absolute;top:732.50px;height:19px;line-height:19px;font-size:13px;color:#3a3a3a;white-space:pre;left:0.97px;transform-origin:50% 50%;transform:scaleX(1.0200);">28</div>
<div style="position:absolute;top:752.50px;height:19px;line-height:19px;font-size:13px;color:#3a3a3a;white-space:pre;left:0.97px;transform-origin:50% 50%;transform:scaleX(1.0200);">29</div>
<div style="position:absolute;top:772.50px;height:19px;line-height:19px;font-size:13px;color:#3a3a3a;white-space:pre;left:0.97px;transform-origin:50% 50%;transform:scaleX(1.0200);">30</div>
<div style="position:absolute;top:792.50px;height:19px;line-height:19px;font-size:13px;color:#3a3a3a;white-space:pre;left:0.97px;transform-origin:50% 50%;transform:scaleX(1.0200);">31</div>
<div style="position:absolute;top:812.50px;height:19px;line-height:19px;font-size:13px;color:#3a3a3a;white-space:pre;left:0.97px;transform-origin:50% 50%;transform:scaleX(1.0200);">32</div>
<div style="position:absolute;top:832.50px;height:19px;line-height:19px;font-size:13px;color:#3a3a3a;white-space:pre;left:0.97px;transform-origin:50% 50%;transform:scaleX(1.0200);">33</div>
<div style="position:absolute;top:192.50px;height:19px;line-height:19px;font-size:13px;color:#000;white-space:pre;left:22.60px;transform-origin:0 50%;transform:scaleX(1.0375);">#</div>
<div style="position:absolute;top:192.50px;height:19px;line-height:19px;font-size:13px;color:#000;white-space:pre;left:86.80px;transform-origin:0 50%;transform:scaleX(1.0254);">Время</div>
<div style="position:absolute;top:192.50px;height:19px;line-height:19px;font-size:13px;color:#000;white-space:pre;left:207.80px;transform-origin:0 50%;transform:scaleX(1.0762);">Действие</div>
<div style="position:absolute;top:192.50px;height:19px;line-height:19px;font-size:13px;color:#000;white-space:pre;left:452.80px;transform-origin:0 50%;transform:scaleX(1.0491);">Action Data</div>
<div style="position:absolute;top:212.50px;height:19px;line-height:19px;font-size:13px;color:#000;white-space:pre;left:74.77px;transform-origin:100% 50%;transform:scaleX(1.0200);">1</div>
<div style="position:absolute;top:212.50px;height:19px;line-height:19px;font-size:13px;color:#000;white-space:pre;left:176.98px;transform-origin:100% 50%;transform:scaleX(1.0200);">-300</div>
<div style="position:absolute;top:212.50px;height:19px;line-height:19px;font-size:13px;color:#000;white-space:pre;left:207.80px;transform-origin:0 50%;transform:scaleX(1.0787);">changeVideoPosition</div>
<div style="position:absolute;top:212.50px;height:19px;line-height:19px;font-size:13px;color:#000;white-space:pre;left:452.80px;transform-origin:0 50%;transform:scaleX(1.1271);">hide</div>
<div style="position:absolute;top:232.50px;height:19px;line-height:19px;font-size:13px;color:#000;white-space:pre;left:74.77px;transform-origin:100% 50%;transform:scaleX(1.0200);">2</div>
<div style="position:absolute;top:232.50px;height:19px;line-height:19px;font-size:13px;color:#000;white-space:pre;left:176.98px;transform-origin:100% 50%;transform:scaleX(1.0200);">-280</div>
<div style="position:absolute;top:232.50px;height:19px;line-height:19px;font-size:13px;color:#000;white-space:pre;left:207.80px;transform-origin:0 50%;transform:scaleX(1.0384);">changeSlide</div>
<div style="position:absolute;top:232.50px;height:19px;line-height:19px;font-size:13px;color:#000;white-space:pre;left:452.80px;transform-origin:0 50%;transform:scaleX(1.1140);">number</div>
<div style="position:absolute;top:232.50px;height:19px;line-height:19px;font-size:13px;color:#000;white-space:pre;left:1046.77px;transform-origin:100% 50%;transform:scaleX(1.0200);">1</div>
<div style="position:absolute;top:252.50px;height:19px;line-height:19px;font-size:13px;color:#000;white-space:pre;left:74.77px;transform-origin:100% 50%;transform:scaleX(1.0200);">3</div>
<div style="position:absolute;top:252.50px;height:19px;line-height:19px;font-size:13px;color:#000;white-space:pre;left:176.98px;transform-origin:100% 50%;transform:scaleX(1.0200);">-270</div>
<div style="position:absolute;top:252.50px;height:19px;line-height:19px;font-size:13px;color:#000;white-space:pre;left:207.80px;transform-origin:0 50%;transform:scaleX(1.0384);">changeSlide</div>
<div style="position:absolute;top:252.50px;height:19px;line-height:19px;font-size:13px;color:#000;white-space:pre;left:452.80px;transform-origin:0 50%;transform:scaleX(1.1140);">number</div>
<div style="position:absolute;top:252.50px;height:19px;line-height:19px;font-size:13px;color:#000;white-space:pre;left:1046.77px;transform-origin:100% 50%;transform:scaleX(1.0200);">2</div>
<div style="position:absolute;top:272.50px;height:19px;line-height:19px;font-size:13px;color:#000;white-space:pre;left:74.77px;transform-origin:100% 50%;transform:scaleX(1.0200);">4</div>
<div style="position:absolute;top:272.50px;height:19px;line-height:19px;font-size:13px;color:#000;white-space:pre;left:176.98px;transform-origin:100% 50%;transform:scaleX(1.0200);">-260</div>
<div style="position:absolute;top:272.50px;height:19px;line-height:19px;font-size:13px;color:#000;white-space:pre;left:207.80px;transform-origin:0 50%;transform:scaleX(1.0384);">changeSlide</div>
<div style="position:absolute;top:272.50px;height:19px;line-height:19px;font-size:13px;color:#000;white-space:pre;left:452.80px;transform-origin:0 50%;transform:scaleX(1.1140);">number</div>
<div style="position:absolute;top:272.50px;height:19px;line-height:19px;font-size:13px;color:#000;white-space:pre;left:1046.77px;transform-origin:100% 50%;transform:scaleX(1.0200);">3</div>
<div style="position:absolute;top:292.50px;height:19px;line-height:19px;font-size:13px;color:#000;white-space:pre;left:74.77px;transform-origin:100% 50%;transform:scaleX(1.0200);">5</div>
<div style="position:absolute;top:292.50px;height:19px;line-height:19px;font-size:13px;color:#000;white-space:pre;left:176.98px;transform-origin:100% 50%;transform:scaleX(1.0200);">-250</div>
<div style="position:absolute;top:292.50px;height:19px;line-height:19px;font-size:13px;color:#000;white-space:pre;left:207.80px;transform-origin:0 50%;transform:scaleX(1.0384);">changeSlide</div>
<div style="position:absolute;top:292.50px;height:19px;line-height:19px;font-size:13px;color:#000;white-space:pre;left:452.80px;transform-origin:0 50%;transform:scaleX(1.1140);">number</div>
<div style="position:absolute;top:292.50px;height:19px;line-height:19px;font-size:13px;color:#000;white-space:pre;left:1046.77px;transform-origin:100% 50%;transform:scaleX(1.0200);">4</div>
<div style="position:absolute;top:312.50px;height:19px;line-height:19px;font-size:13px;color:#000;white-space:pre;left:74.77px;transform-origin:100% 50%;transform:scaleX(1.0200);">6</div>
<div style="position:absolute;top:312.50px;height:19px;line-height:19px;font-size:13px;color:#000;white-space:pre;left:176.98px;transform-origin:100% 50%;transform:scaleX(1.0200);">-240</div>
<div style="position:absolute;top:312.50px;height:19px;line-height:19px;font-size:13px;color:#000;white-space:pre;left:207.80px;transform-origin:0 50%;transform:scaleX(1.0384);">changeSlide</div>
<div style="position:absolute;top:312.50px;height:19px;line-height:19px;font-size:13px;color:#000;white-space:pre;left:452.80px;transform-origin:0 50%;transform:scaleX(1.1140);">number</div>
<div style="position:absolute;top:312.50px;height:19px;line-height:19px;font-size:13px;color:#000;white-space:pre;left:1046.77px;transform-origin:100% 50%;transform:scaleX(1.0200);">5</div>
<div style="position:absolute;top:332.50px;height:19px;line-height:19px;font-size:13px;color:#000;white-space:pre;left:74.77px;transform-origin:100% 50%;transform:scaleX(1.0200);">7</div>
<div style="position:absolute;top:332.50px;height:19px;line-height:19px;font-size:13px;color:#000;white-space:pre;left:176.98px;transform-origin:100% 50%;transform:scaleX(1.0200);">-120</div>
<div style="position:absolute;top:332.50px;height:19px;line-height:19px;font-size:13px;color:#000;white-space:pre;left:207.80px;transform-origin:0 50%;transform:scaleX(1.0317);">sendMessage</div>
<div style="position:absolute;top:332.50px;height:19px;line-height:19px;font-size:13px;color:#000;white-space:pre;left:452.80px;transform-origin:0 50%;transform:scaleX(1.0525);">Ведущий</div>
<div style="position:absolute;top:332.50px;height:19px;line-height:19px;font-size:13px;color:#000;white-space:pre;left:599.80px;transform-origin:0 50%;transform:scaleX(1.0141);">Ещё слайдов!</div>
<div style="position:absolute;top:352.50px;height:19px;line-height:19px;font-size:13px;color:#000;white-space:pre;left:74.77px;transform-origin:100% 50%;transform:scaleX(1.0200);">8</div>
<div style="position:absolute;top:352.50px;height:19px;line-height:19px;font-size:13px;color:#000;white-space:pre;left:177.95px;transform-origin:100% 50%;transform:scaleX(1.0200);">-110</div>
<div style="position:absolute;top:352.50px;height:19px;line-height:19px;font-size:13px;color:#000;white-space:pre;left:207.80px;transform-origin:0 50%;transform:scaleX(1.0384);">changeSlide</div>
<div style="position:absolute;top:352.50px;height:19px;line-height:19px;font-size:13px;color:#000;white-space:pre;left:452.80px;transform-origin:0 50%;transform:scaleX(1.1140);">number</div>
<div style="position:absolute;top:352.50px;height:19px;line-height:19px;font-size:13px;color:#000;white-space:pre;left:1046.77px;transform-origin:100% 50%;transform:scaleX(1.0200);">6</div>
<div style="position:absolute;top:372.50px;height:19px;line-height:19px;font-size:13px;color:#000;white-space:pre;left:74.77px;transform-origin:100% 50%;transform:scaleX(1.0200);">9</div>
<div style="position:absolute;top:372.50px;height:19px;line-height:19px;font-size:13px;color:#000;white-space:pre;left:176.98px;transform-origin:100% 50%;transform:scaleX(1.0200);">-100</div>
<div style="position:absolute;top:372.50px;height:19px;line-height:19px;font-size:13px;color:#000;white-space:pre;left:207.80px;transform-origin:0 50%;transform:scaleX(1.0384);">changeSlide</div>
<div style="position:absolute;top:372.50px;height:19px;line-height:19px;font-size:13px;color:#000;white-space:pre;left:452.80px;transform-origin:0 50%;transform:scaleX(1.1274);">next</div>
<div style="position:absolute;top:392.50px;height:19px;line-height:19px;font-size:13px;color:#000;white-space:pre;left:67.54px;transform-origin:100% 50%;transform:scaleX(1.0200);">10</div>
<div style="position:absolute;top:392.50px;height:19px;line-height:19px;font-size:13px;color:#000;white-space:pre;left:184.21px;transform-origin:100% 50%;transform:scaleX(1.0200);">-90</div>
<div style="position:absolute;top:392.50px;height:19px;line-height:19px;font-size:13px;color:#000;white-space:pre;left:207.80px;transform-origin:0 50%;transform:scaleX(1.0384);">changeSlide</div>
<div style="position:absolute;top:392.50px;height:19px;line-height:19px;font-size:13px;color:#000;white-space:pre;left:452.80px;transform-origin:0 50%;transform:scaleX(1.1274);">next</div>
<div style="position:absolute;top:412.50px;height:19px;line-height:19px;font-size:13px;color:#000;white-space:pre;left:68.51px;transform-origin:100% 50%;transform:scaleX(1.0200);">11</div>
<div style="position:absolute;top:412.50px;height:19px;line-height:19px;font-size:13px;color:#000;white-space:pre;left:184.21px;transform-origin:100% 50%;transform:scaleX(1.0200);">-80</div>
<div style="position:absolute;top:412.50px;height:19px;line-height:19px;font-size:13px;color:#000;white-space:pre;left:207.80px;transform-origin:0 50%;transform:scaleX(1.0384);">changeSlide</div>
<div style="position:absolute;top:412.50px;height:19px;line-height:19px;font-size:13px;color:#000;white-space:pre;left:452.80px;transform-origin:0 50%;transform:scaleX(1.1274);">next</div>
<div style="position:absolute;top:432.50px;height:19px;line-height:19px;font-size:13px;color:#000;white-space:pre;left:67.54px;transform-origin:100% 50%;transform:scaleX(1.0200);">12</div>
<div style="position:absolute;top:432.50px;height:19px;line-height:19px;font-size:13px;color:#000;white-space:pre;left:184.21px;transform-origin:100% 50%;transform:scaleX(1.0200);">-60</div>
<div style="position:absolute;top:432.50px;height:19px;line-height:19px;font-size:13px;color:#000;white-space:pre;left:207.80px;transform-origin:0 50%;transform:scaleX(1.0384);">changeSlide</div>
<div style="position:absolute;top:432.50px;height:19px;line-height:19px;font-size:13px;color:#000;white-space:pre;left:452.80px;transform-origin:0 50%;transform:scaleX(1.0954);">prev</div>
<div style="position:absolute;top:452.50px;height:19px;line-height:19px;font-size:13px;color:#000;white-space:pre;left:67.54px;transform-origin:100% 50%;transform:scaleX(1.0200);">13</div>
<div style="position:absolute;top:452.50px;height:19px;line-height:19px;font-size:13px;color:#000;white-space:pre;left:184.21px;transform-origin:100% 50%;transform:scaleX(1.0200);">-60</div>
<div style="position:absolute;top:452.50px;height:19px;line-height:19px;font-size:13px;color:#000;white-space:pre;left:207.80px;transform-origin:0 50%;transform:scaleX(1.0317);">sendMessage</div>
<div style="position:absolute;top:452.50px;height:19px;line-height:19px;font-size:13px;color:#000;white-space:pre;left:452.80px;transform-origin:0 50%;transform:scaleX(1.0745);">Гиперактивный</div>
<div style="position:absolute;top:452.50px;height:19px;line-height:19px;font-size:13px;color:#000;white-space:pre;left:599.50px;transform-origin:0 50%;transform:scaleX(1.0413);">Давайте</div>
<div style="position:absolute;top:452.50px;height:19px;line-height:19px;font-size:13px;color:#000;white-space:pre;left:656.00px;transform-origin:0 50%;transform:scaleX(1.0855);">уже</div>
<div style="position:absolute;top:452.50px;height:19px;line-height:19px;font-size:13px;color:#000;white-space:pre;left:684.40px;transform-origin:0 50%;transform:scaleX(1.0509);">начинать!</div>
<div style="position:absolute;top:452.50px;height:19px;line-height:19px;font-size:13px;color:#000;white-space:pre;left:750.50px;transform-origin:0 50%;transform:scaleX(0.9628);">Не</div>
<div style="position:absolute;top:452.50px;height:19px;line-height:19px;font-size:13px;color:#000;white-space:pre;left:770.90px;transform-origin:0 50%;transform:scaleX(1.0442);">терпится</div>
<div style="position:absolute;top:452.50px;height:19px;line-height:19px;font-size:13px;color:#000;white-space:pre;left:830.70px;transform-origin:0 50%;transform:scaleX(1.0369);">приобщиться</div>
<div style="position:absolute;top:452.50px;height:19px;line-height:19px;font-size:13px;color:#000;white-space:pre;left:918.60px;transform-origin:0 50%;transform:scaleX(1.1780);">к</div>
<div style="position:absolute;top:452.50px;height:19px;line-height:19px;font-size:13px;color:#000;white-space:pre;left:928.50px;transform-origin:0 50%;transform:scaleX(1.0315);">тайным</div>
<div style="position:absolute;top:452.50px;height:19px;line-height:19px;font-size:13px;color:#000;white-space:pre;left:980.10px;transform-origin:0 50%;transform:scaleX(1.1181);">знаниям!!!</div>
<div style="position:absolute;top:472.50px;height:19px;line-height:19px;font-size:13px;color:#000;white-space:pre;left:67.54px;transform-origin:100% 50%;transform:scaleX(1.0200);">14</div>
<div style="position:absolute;top:472.50px;height:19px;line-height:19px;font-size:13px;color:#000;white-space:pre;left:195.77px;transform-origin:100% 50%;transform:scaleX(1.0200);">0</div>
<div style="position:absolute;top:472.50px;height:19px;line-height:19px;font-size:13px;color:#000;white-space:pre;left:207.80px;transform-origin:0 50%;transform:scaleX(1.0787);">changeVideoPosition</div>
<div style="position:absolute;top:472.50px;height:19px;line-height:19px;font-size:13px;color:#000;white-space:pre;left:452.80px;transform-origin:0 50%;transform:scaleX(1.1154);">presentation</div>
<div style="position:absolute;top:492.50px;height:19px;line-height:19px;font-size:13px;color:#000;white-space:pre;left:67.54px;transform-origin:100% 50%;transform:scaleX(1.0200);">15</div>
<div style="position:absolute;top:492.50px;height:19px;line-height:19px;font-size:13px;color:#000;white-space:pre;left:188.54px;transform-origin:100% 50%;transform:scaleX(1.0200);">10</div>
<div style="position:absolute;top:492.50px;height:19px;line-height:19px;font-size:13px;color:#000;white-space:pre;left:207.80px;transform-origin:0 50%;transform:scaleX(1.0822);">banner</div>
<div style="position:absolute;top:492.50px;height:19px;line-height:19px;font-size:13px;color:#000;white-space:pre;left:452.80px;transform-origin:0 50%;transform:scaleX(1.1072);">set</div>
<div style="position:absolute;top:492.50px;height:19px;line-height:19px;font-size:13px;color:#000;white-space:pre;left:599.80px;transform-origin:0 50%;transform:scaleX(1.1273);">belowVideo</div>
<div style="position:absolute;top:492.50px;height:19px;line-height:19px;font-size:13px;color:#000;white-space:pre;left:1172.77px;transform-origin:100% 50%;transform:scaleX(1.0200);">5</div>
<div style="position:absolute;top:512.50px;height:19px;line-height:19px;font-size:13px;color:#000;white-space:pre;left:67.54px;transform-origin:100% 50%;transform:scaleX(1.0200);">17</div>
<div style="position:absolute;top:512.50px;height:19px;line-height:19px;font-size:13px;color:#000;white-space:pre;left:188.54px;transform-origin:100% 50%;transform:scaleX(1.0200);">60</div>
<div style="position:absolute;top:512.50px;height:19px;line-height:19px;font-size:13px;color:#000;white-space:pre;left:207.80px;transform-origin:0 50%;transform:scaleX(1.0787);">changeVideoPosition</div>
<div style="position:absolute;top:512.50px;height:19px;line-height:19px;font-size:13px;color:#000;white-space:pre;left:452.80px;transform-origin:0 50%;transform:scaleX(1.0713);">above-chat</div>
<div style="position:absolute;top:532.50px;height:19px;line-height:19px;font-size:13px;color:#000;white-space:pre;left:67.54px;transform-origin:100% 50%;transform:scaleX(1.0200);">18</div>
<div style="position:absolute;top:532.50px;height:19px;line-height:19px;font-size:13px;color:#000;white-space:pre;left:188.54px;transform-origin:100% 50%;transform:scaleX(1.0200);">65</div>
<div style="position:absolute;top:532.50px;height:19px;line-height:19px;font-size:13px;color:#000;white-space:pre;left:207.80px;transform-origin:0 50%;transform:scaleX(1.0384);">changeSlide</div>
<div style="position:absolute;top:532.50px;height:19px;line-height:19px;font-size:13px;color:#000;white-space:pre;left:452.80px;transform-origin:0 50%;transform:scaleX(1.1140);">number</div>
<div style="position:absolute;top:532.50px;height:19px;line-height:19px;font-size:13px;color:#000;white-space:pre;left:1046.77px;transform-origin:100% 50%;transform:scaleX(1.0200);">1</div>
<div style="position:absolute;top:552.50px;height:19px;line-height:19px;font-size:13px;color:#000;white-space:pre;left:67.54px;transform-origin:100% 50%;transform:scaleX(1.0200);">19</div>
<div style="position:absolute;top:552.50px;height:19px;line-height:19px;font-size:13px;color:#000;white-space:pre;left:181.31px;transform-origin:100% 50%;transform:scaleX(1.0200);">120</div>
<div style="position:absolute;top:552.50px;height:19px;line-height:19px;font-size:13px;color:#000;white-space:pre;left:207.80px;transform-origin:0 50%;transform:scaleX(1.0561);">blockChatToggle</div>
<div style="position:absolute;top:552.50px;height:19px;line-height:19px;font-size:13px;color:#000;white-space:pre;left:452.80px;transform-origin:0 50%;transform:scaleX(1.0775);">block</div>
<div style="position:absolute;top:572.50px;height:19px;line-height:19px;font-size:13px;color:#000;white-space:pre;left:67.54px;transform-origin:100% 50%;transform:scaleX(1.0200);">20</div>
<div style="position:absolute;top:572.50px;height:19px;line-height:19px;font-size:13px;color:#000;white-space:pre;left:181.31px;transform-origin:100% 50%;transform:scaleX(1.0200);">130</div>
<div style="position:absolute;top:572.50px;height:19px;line-height:19px;font-size:13px;color:#000;white-space:pre;left:207.80px;transform-origin:0 50%;transform:scaleX(1.0317);">sendMessage</div>
<div style="position:absolute;top:572.50px;height:19px;line-height:19px;font-size:13px;color:#000;white-space:pre;left:452.80px;transform-origin:0 50%;transform:scaleX(1.0705);">Взломщик</div>
<div style="position:absolute;top:572.50px;height:19px;line-height:19px;font-size:13px;color:#000;white-space:pre;left:599.80px;transform-origin:0 50%;transform:scaleX(0.9276);">Чат</div>
<div style="position:absolute;top:572.50px;height:19px;line-height:19px;font-size:13px;color:#000;white-space:pre;left:624.30px;transform-origin:0 50%;transform:scaleX(1.0642);">заблокирован,</div>
<div style="position:absolute;top:572.50px;height:19px;line-height:19px;font-size:13px;color:#000;white-space:pre;left:721.10px;transform-origin:0 50%;transform:scaleX(0.9786);">но</div>
<div style="position:absolute;top:572.50px;height:19px;line-height:19px;font-size:13px;color:#000;white-space:pre;left:739.60px;transform-origin:0 50%;transform:scaleX(1.0485);">сообщение</div>
<div style="position:absolute;top:572.50px;height:19px;line-height:19px;font-size:13px;color:#000;white-space:pre;left:815.30px;transform-origin:0 50%;transform:scaleX(1.0362);">из</div>
<div style="position:absolute;top:572.50px;height:19px;line-height:19px;font-size:13px;color:#000;white-space:pre;left:833.10px;transform-origin:0 50%;transform:scaleX(1.0409);">сценария</div>
<div style="position:absolute;top:572.50px;height:19px;line-height:19px;font-size:13px;color:#000;white-space:pre;left:896.50px;transform-origin:0 50%;transform:scaleX(1.0857);">проходит</div>
<div style="position:absolute;top:592.50px;height:19px;line-height:19px;font-size:13px;color:#000;white-space:pre;left:67.54px;transform-origin:100% 50%;transform:scaleX(1.0200);">21</div>
<div style="position:absolute;top:592.50px;height:19px;line-height:19px;font-size:13px;color:#000;white-space:pre;left:181.31px;transform-origin:100% 50%;transform:scaleX(1.0200);">180</div>
<div style="position:absolute;top:592.50px;height:19px;line-height:19px;font-size:13px;color:#000;white-space:pre;left:207.80px;transform-origin:0 50%;transform:scaleX(1.0561);">blockChatToggle</div>
<div style="position:absolute;top:592.50px;height:19px;line-height:19px;font-size:13px;color:#000;white-space:pre;left:452.80px;transform-origin:0 50%;transform:scaleX(1.0981);">unblock</div>
<div style="position:absolute;left:19px;top:190px;width:67px;height:23px;background:transparent;border:2px solid #217346;"></div>
<div style="position:absolute;left:81px;top:208px;width:6px;height:6px;background:#217346;border-top:1px solid #fff;border-left:1px solid #fff;"></div>
<svg style="position:absolute;left:690px;top:332px;" width="19" height="19" viewBox="0 0 19 19"><circle cx="9.5" cy="9.6" r="8.1" fill="none" stroke="#111" stroke-width="1"/>
<ellipse cx="6.6" cy="7.1" rx="0.75" ry="1.3" fill="#111"/><ellipse cx="12.4" cy="7.1" rx="0.75" ry="1.3" fill="#111"/>
<rect x="4.5" y="10.6" width="10" height="3.4" rx="1.6" fill="#fff" stroke="#222" stroke-width="0.9"/>
<path d="M6.5 10.6v3.4M8.5 10.6v3.4M10.500 10.6v3.4M12.5 10.6v3.4M4.500 12.3h10" stroke="#666" stroke-width="0.5"/></svg>
</div></body></html>
